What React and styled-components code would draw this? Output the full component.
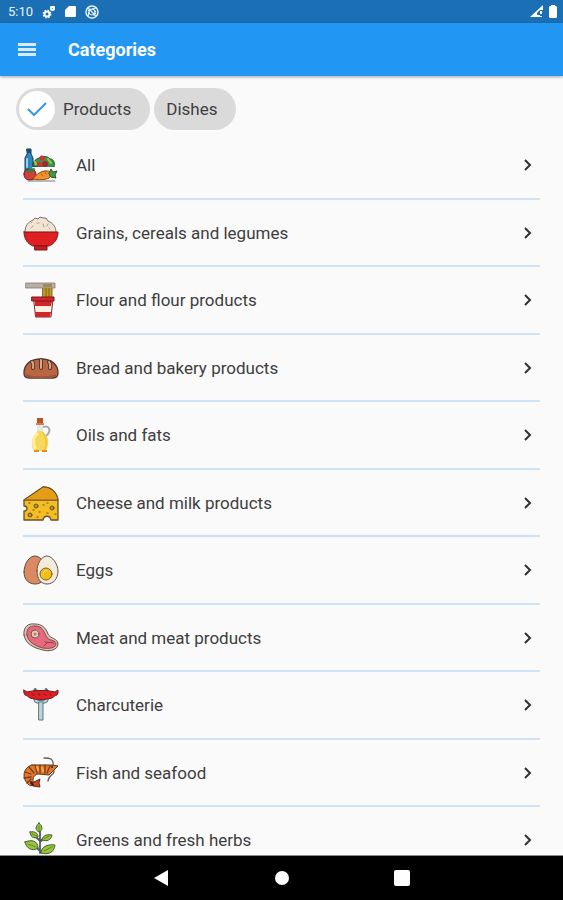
import { useState } from 'react';
import styled, { createGlobalStyle } from 'styled-components';

const GlobalStyle = createGlobalStyle`
  * {
    box-sizing: border-box;
  }

  body {
    margin: 0;
    background: #fafafa;
    font-family: Roboto, sans-serif;
  }

  svg {
    display: block;
    flex: none;
  }
`;

const Screen = styled.div`
  display: flex;
  flex-direction: column;
  height: 100vh;
  color: #3e3e3e;
`;

const PlainButton = styled.button`
  border: 0;
  padding: 0;
  background: none;
  font: inherit;
  color: inherit;
  cursor: pointer;
`;

// Top bars
const StatusBar = styled.div`
  display: flex;
  align-items: center;
  justify-content: space-between;
  flex: none;
  height: 23px;
  padding: 0 6px 0 8px;
  background: #1a6fb5;
  color: #e8f2fb;
  font-size: 13px;
`;

const StatusGroup = styled.div`
  display: flex;
  align-items: center;
  gap: ${({ $gap }) => $gap}px;
`;

const AppBar = styled.header`
  display: flex;
  align-items: center;
  gap: 32px;
  height: 53px;
  flex: none;
  padding: 0 18px;
  background: #2196f3;
  box-shadow: 0 1px 3px rgba(0, 0, 0, 0.35);
  z-index: 1;
`;

const Title = styled.h1`
  margin: 0;
  color: #fff;
  font-size: 18px;
  font-weight: 700;
`;

// Filter chips
const Chips = styled.div`
  display: flex;
  gap: 4px;
  padding: 12px 16px 0;
`;

const Chip = styled(PlainButton)`
  display: flex;
  align-items: center;
  gap: 8px;
  height: 42px;
  padding: 0 19px 0 ${({ $selected }) => ($selected ? 3 : 12)}px;
  border-radius: 21px;
  background: #dadada;
  font-size: 17px;
`;

const ChipMark = styled.span`
  display: grid;
  place-items: center;
  width: 36px;
  height: 36px;
  border-radius: 50%;
  background: #fff;
`;

// Category list
const Main = styled.main`
  flex: 1;
  min-height: 0;
  overflow: hidden;
  border-bottom: 1px solid #8a8a8a;
`;

const List = styled.ul`
  margin: 2px 23px 0;
  padding: 0;
  list-style: none;
`;

const Item = styled.li`
  height: 68px;
  border-bottom: 2px solid #cfe3f5;

  &:nth-child(even) {
    height: 67px;
  }
`;

const Row = styled(PlainButton)`
  display: flex;
  align-items: center;
  gap: 17px;
  width: 100%;
  height: 100%;
  padding-right: 7px;
  font-size: 17px;
  text-align: left;
`;

const Label = styled.span`
  flex: 1;
`;

// System navigation
const NavBar = styled.nav`
  display: flex;
  justify-content: center;
  flex: none;
  height: 44px;
  background: #000;
`;

const NavButton = styled(PlainButton)`
  display: grid;
  place-items: center;
  width: 120px;
`;

function Art({ children }) {
  return (
    <svg width="36" height="36" viewBox="0 0 36 36" strokeLinejoin="round" strokeLinecap="round" aria-hidden="true">
      {children}
    </svg>
  );
}

const AllIcon = () => (
  <Art>
    <path d="M4 2h4v5l2 4v14H2V11l2-4z" fill="#2f86bd" stroke="#143a55" />
    <path d="M4 2h4v4H4z" fill="#174c77" />
    <path d="M4 12v8" stroke="#8fd3f2" strokeWidth="2" />
    <path d="M10 19c0-5 3-7 6-8 4-3 10-1 11 1 4 0 5 4 4 8z" fill="#3d9647" stroke="#1f4d28" />
    <circle cx="16" cy="17" r="2.5" fill="#d62f34" />
    <circle cx="22" cy="17" r="3" fill="#a62630" />
    <circle cx="19" cy="11" r="2.5" fill="#d62f34" />
    <path d="M25 12l3 4M12 15l1 2" stroke="#9bcf45" strokeWidth="2" />
    <path d="M9 20h23l-3 9H13z" fill="#fbfbfb" />
    <path d="M1 27c0-5 5-6 7-4 4-1 5 2 5 5 0 4-3 5-6 5-4 0-6-2-6-6z" fill="#dc3939" stroke="#5a2522" />
    <path d="M4 24l4 1 3-3M8 25l-1-3" stroke="#348344" strokeWidth="2" fill="none" />
    <path d="M10 32c2-4 9-9 14-8 5 0 5 5 2 7-3 2-11 2-16 1z" fill="#ef922c" stroke="#8a4c16" />
    <path d="M18 27l2 2M22 25l1 2" stroke="#a85c18" />
    <path d="M26 26l2-4 2 3 4-1-2 4 1 3-5-1z" fill="#469549" stroke="#285b2b" />
    <path d="M5 34h27" stroke="#777" />
  </Art>
);

const RiceIcon = () => (
  <Art>
    <path d="M2 17C2 11 5 7 10 5l2-2 3 1 2-2 3 1 3 0 2 3c5 2 8 6 8 11z" fill="#f2e3d2" stroke="#77706a" />
    <path d="M8 13l2-2M14 8l2 0M20 9l1 3M25 9l-1 2M26 13l1 1M8 8l1-1" stroke="#b79f87" />
    <path d="M1 17h34c0 7-4 12-9 14H10C5 29 1 24 1 17z" fill="#df2023" stroke="#771719" />
    <path d="M12 31h12v4H12z" fill="#c91c22" stroke="#771719" />
  </Art>
);

const NoodleIcon = () => (
  <Art>
    <path d="M20 4h9v12h-9z" fill="#c49b22" stroke="#7b6521" />
    <path d="M23 5v11M26 5v11" stroke="#796018" />
    <path d="M3 1h29v5H3z" fill="#b9afa6" stroke="#857a72" strokeWidth=".8" />
    <path d="M20 2h9v3h-9z" fill="#a08a4c" />
    <path d="M11 17h19l-2 18H13z" fill="#fff0df" stroke="#70302c" />
    <path d="M12 19h17l-1 5H12zM12 30h16l-1 5H13z" fill="#d32529" />
    <path d="M9 15h22v4H9z" fill="#d9232b" stroke="#741d22" />
  </Art>
);

const BreadIcon = () => (
  <Art>
    <path d="M1 23C1 14 8 9 18 9s17 5 17 14c0 4-2 5-5 5H6c-3 0-5-1-5-5z" fill="#b96643" stroke="#59362b" strokeWidth="1.3" />
    <path d="M3 24c5 3 25 3 30 0v2l-4 2H7l-4-2z" fill="#a2543a" />
    <path d="M9 12c2 1 1 5 1 6M18 10v8M26 12c2 2 1 5 1 6" stroke="#59362b" strokeWidth="4" />
    <path d="M9 12c2 1 1 5 1 6M18 10v8M26 12c2 2 1 5 1 6" stroke="#dba78a" strokeWidth="2" />
  </Art>
);

const OilIcon = () => (
  <Art>
    <path d="M20 10c6-2 8 3 5 7l-3 3" fill="none" stroke="#a1aeb7" strokeWidth="2" />
    <path d="M14 7h6v8c4 3 6 8 5 13-1 3-1 4-2 6H11C7 27 9 19 14 15z" fill="#f6d95b" />
    <path d="M14 7h6v7h-6z" fill="#e4e7e3" />
    <path d="M14 17c-4 3-4 9-2 14" stroke="#fff0a0" strokeWidth="3" fill="none" />
    <path d="M20 16c4 5 4 10 2 16" stroke="#f3c940" strokeWidth="2" fill="none" />
    <path d="M14 1h6v6h-6z" fill="#b85422" />
    <path d="M13 6h8v2h-8z" fill="#d18043" />
    <path d="M11 33h5v2h-5zM19 33h5v2h-5z" fill="#e88d25" />
  </Art>
);

const CheeseIcon = () => (
  <Art>
    <path d="M1 15L20 2c9 0 14 6 15 13v20h-7c-1-5-7-5-8 0H1v-9c4 0 4-5 0-5z" fill="#f4bd24" stroke="#665027" strokeWidth="1.3" />
    <path d="M1 15L20 2c9 0 14 6 15 13z" fill="#e59d18" stroke="#665027" />
    <path d="M2 15h32" stroke="#9f701e" />
    <g fill="#b99a29" stroke="#665027">
      <circle cx="13" cy="21" r="2" />
      <circle cx="29" cy="23" r="2" />
      <circle cx="7" cy="30" r="2" />
    </g>
    <path d="M20 20h1M16 27h1M24 28h1M24 18h1M6 18h1M10 25h1M14 32h1M32 29h1" stroke="#9c781f" strokeWidth="1.5" />
  </Art>
);

const EggIcon = () => (
  <Art>
    <path d="M1 20C1 12 6 4 12 4s11 8 11 16-5 12-11 12S1 28 1 20z" fill="#d98a63" stroke="#6b493c" />
    <path d="M14 19C14 11 19 4 24 4s11 8 11 15c0 8-5 13-11 13s-10-5-10-13z" fill="#f5eadb" stroke="#62574e" />
    <circle cx="23" cy="22" r="6" fill="#f4bf15" stroke="#73612e" />
    <path d="M20 23c0-3 1-4 4-4" stroke="#ffe16b" fill="none" />
  </Art>
);

const MeatIcon = () => (
  <Art>
    <path d="M1 15C0 7 5 3 12 4c7 0 11 4 13 10 2 5 10 4 10 10 0 6-9 8-15 6C10 28 2 23 1 15z" fill="#d9c5b2" stroke="#645449" />
    <path d="M4 15C3 8 7 6 12 6c7 0 9 5 11 10 3 6 10 3 10 8 0 4-7 5-13 4C12 26 5 22 4 15z" fill="#e8697e" stroke="#824851" />
    <circle cx="12" cy="14" r="4" fill="#e6cbb7" stroke="#72534a" />
    <circle cx="12" cy="14" r="1.5" fill="#b97c72" />
    <path d="M22 22c3 1 8 0 9 1M21 26l3-3" stroke="#8c3e50" fill="none" />
  </Art>
);

const SausageIcon = () => (
  <Art>
    <path d="M12 10c0 5 3 5 6 5s6 0 6-5" fill="none" stroke="#5f7881" strokeWidth="4" />
    <path d="M12 10c0 5 3 5 6 5s6 0 6-5" fill="none" stroke="#b9d5dc" strokeWidth="2" />
    <path d="M16 15h4v18h-4z" fill="#b9d5dc" stroke="#5d7780" />
    <path d="M11 4l1-2 2 2M22 4l1-2 2 2" stroke="#597079" strokeWidth="2" fill="none" />
    <path d="M1 3l3 2c8-2 20-2 28 0l3-2v3l-1 2c-2 0-3 2-5 3-7 2-15 2-22 0-2-1-3-3-5-3L1 6z" fill="#e31d24" stroke="#6b1d20" />
    <path d="M9 7l2 1M15 7l2 1M21 7l2 1M27 7l1 1" stroke="#8e2428" strokeWidth="1.5" />
  </Art>
);

const ShrimpIcon = () => (
  <Art>
    <path d="M22 3h-1M22 3c5 0 9 1 8 7M30 14c4 5-5 6-5 12" fill="none" stroke="#60615d" strokeWidth="1.3" />
    <path d="M9 10h20l6 1-4 4-5 5-11-1c-5 1-6 6-4 9l-3 3c-9-4-10-18 1-21z" fill="#e37928" stroke="#613822" />
    <path d="M12 10l2 8M17 10v8M22 10v9M6 12l5 6M2 17l6 2M1 23l7-1M4 28l4-4M27 11l-3 7" stroke="#763b23" strokeWidth="1.3" />
    <path d="M14 12l1 3M19 13l1 3" stroke="#f6b33c" strokeWidth="2" />
    <circle cx="29" cy="12" r="1" fill="#222" />
    <path d="M8 28l3-1 6-3-1 4 1 4-7-1z" fill="#d4431f" stroke="#522b22" />
    <path d="M8 27l2 3" stroke="#33231d" strokeWidth="2" />
  </Art>
);

const HerbIcon = () => (
  <Art>
    <path d="M17 9v22M17 19l-4-4M17 20l5-5M17 29l-5-5M18 30l5-3" stroke="#565965" strokeWidth="1.8" fill="none" />
    <g fill="#9ac43c" stroke="#42602d">
      <path d="M16 1c-4 4-4 7 0 9 4-2 4-5 0-9z" />
      <path d="M7 10c5-1 8 1 8 5-4 2-8 0-8-5zM19 18c0-4 4-6 10-5-1 5-5 7-10 5z" />
      <path d="M2 20c7-3 13-1 13 6-6 4-12 0-13-6zM18 31c0-6 6-9 14-8-1 8-7 10-14 8z" />
    </g>
    <path d="M16 4v5M9 12l5 2M21 17l5-3M5 22l8 3M21 29l8-4" stroke="#4e7a2b" strokeWidth=".8" />
  </Art>
);

const categories = [
  { name: 'All', Icon: AllIcon },
  { name: 'Grains, cereals and legumes', Icon: RiceIcon },
  { name: 'Flour and flour products', Icon: NoodleIcon },
  { name: 'Bread and bakery products', Icon: BreadIcon },
  { name: 'Oils and fats', Icon: OilIcon },
  { name: 'Cheese and milk products', Icon: CheeseIcon },
  { name: 'Eggs', Icon: EggIcon },
  { name: 'Meat and meat products', Icon: MeatIcon },
  { name: 'Charcuterie', Icon: SausageIcon },
  { name: 'Fish and seafood', Icon: ShrimpIcon },
  { name: 'Greens and fresh herbs', Icon: HerbIcon },
];

export default function App() {
  const [filter, setFilter] = useState('Products');

  return (
    <Screen>
      <GlobalStyle />
      <StatusBar>
        <StatusGroup $gap={9}>
          <span>5:10</span>
          <svg width="14" height="14" viewBox="0 0 14 14" fill="none" stroke="#fff">
            <circle cx="5" cy="9" r="2.5" strokeWidth="2" />
            <circle cx="5" cy="9" r="3.8" strokeWidth="1.2" strokeDasharray="1.6 1.4" />
            <circle cx="10.5" cy="3.5" r="1.5" strokeWidth="2" />
            <path d="M8 2h5" strokeWidth="1.5" />
          </svg>
          <svg width="11" height="13" viewBox="0 0 11 13">
            <path d="M4 1h6a1 1 0 0 1 1 1v9a1 1 0 0 1-1 1H1a1 1 0 0 1-1-1V5z" fill="#fff" />
          </svg>
          <svg width="14" height="14" viewBox="0 0 14 14" fill="none" stroke="#e8f2fb">
            <circle cx="7" cy="7" r="6" strokeWidth="1.5" />
            <circle cx="7" cy="7" r="3" />
            <path d="M3 3l8 8M7 4l4-1M4 7l-1 4M6 4L3 6M8 10l3-2M9 5l2 2" strokeWidth="1.2" />
          </svg>
        </StatusGroup>
        <StatusGroup $gap={6}>
          <svg width="13" height="13" viewBox="0 0 13 13">
            <path d="M13 0v5h-3v7H0z" fill="#fff" />
            <path d="M7 8l3-3v5H7z" fill="#1a6fb5" />
            <path d="M11 6v3M11 11v1" stroke="#fff" strokeWidth="2" />
          </svg>
          <svg width="8" height="13" viewBox="0 0 8 13">
            <path d="M2 0h4v1h1l1 1v10l-1 1H1l-1-1V2l1-1h1z" fill="#fff" />
          </svg>
        </StatusGroup>
      </StatusBar>
      <AppBar>
        <PlainButton aria-label="Open menu">
          <svg width="18" height="13" viewBox="0 0 18 13" fill="#d9ebfd">
            <path d="M0 0h18v3H0zM0 5h18v3H0zM0 10h18v3H0z" />
          </svg>
        </PlainButton>
        <Title>Categories</Title>
      </AppBar>
      <Chips>
        {['Products', 'Dishes'].map((name) => (
          <Chip key={name} $selected={filter === name} aria-pressed={filter === name} onClick={() => setFilter(name)}>
            {filter === name && (
              <ChipMark>
                <svg width="20" height="16" viewBox="0 0 20 16">
                  <path d="M1 8l6 6L19 2" fill="none" stroke="#3a97ee" strokeWidth="2" />
                </svg>
              </ChipMark>
            )}
            {name}
          </Chip>
        ))}
      </Chips>
      <Main>
        <List>
          {categories.map(({ name, Icon }) => (
            <Item key={name}>
              <Row>
                <Icon />
                <Label>{name}</Label>
                <svg width="10" height="14" viewBox="0 0 10 14" aria-hidden="true">
                  <path d="M2 2l5 5-5 5" fill="none" stroke="#303030" strokeWidth="2" />
                </svg>
              </Row>
            </Item>
          ))}
        </List>
      </Main>
      <NavBar>
        <NavButton aria-label="Back">
          <svg width="16" height="16" viewBox="0 0 16 16" fill="#fff">
            <path d="M14 0v16L0 8z" />
          </svg>
        </NavButton>
        <NavButton aria-label="Home">
          <svg width="16" height="16" viewBox="0 0 16 16" fill="#fff">
            <circle cx="8" cy="8" r="7" />
          </svg>
        </NavButton>
        <NavButton aria-label="Recent apps">
          <svg width="16" height="16" viewBox="0 0 16 16" fill="#fff">
            <rect width="16" height="16" rx="2" />
          </svg>
        </NavButton>
      </NavBar>
    </Screen>
  );
}
